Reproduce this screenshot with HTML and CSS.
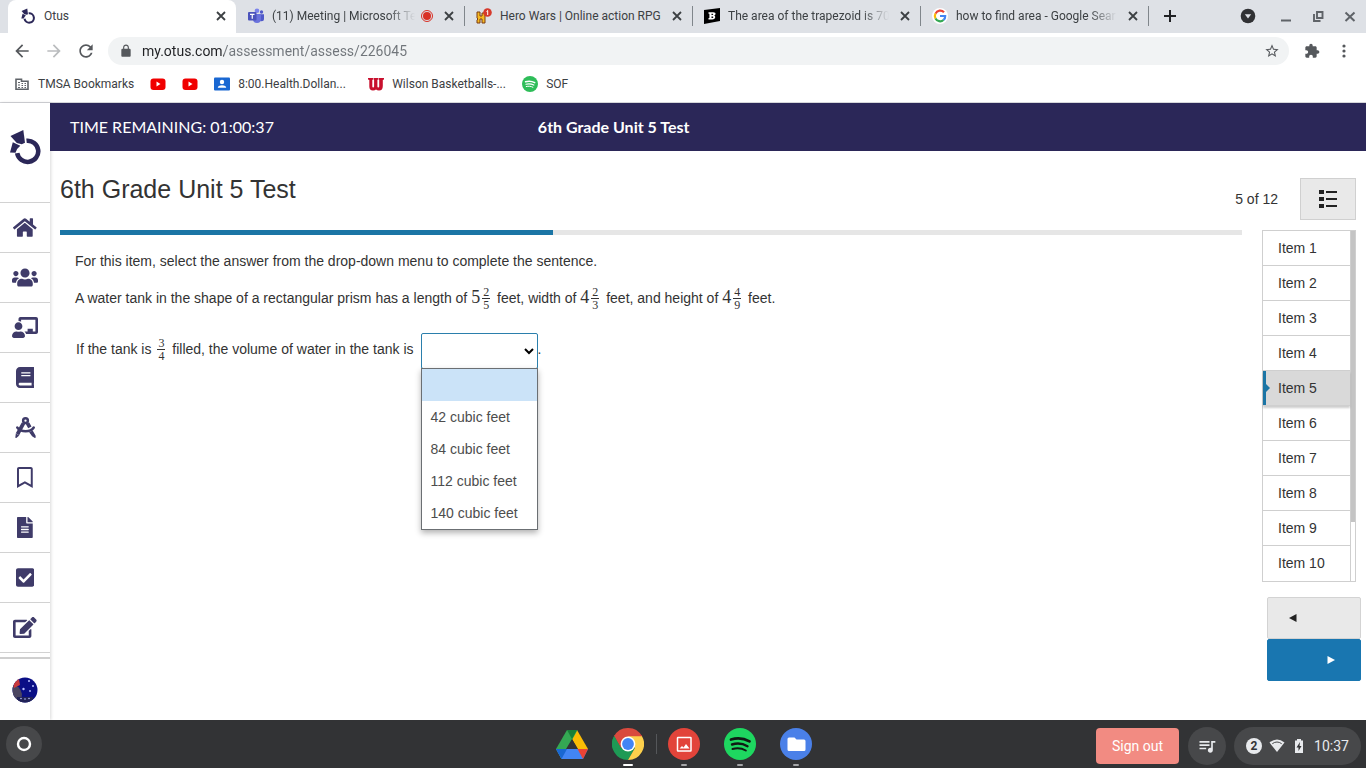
FILE: index.html
```html
<!DOCTYPE html>
<html lang="en">
<head>
<meta charset="utf-8">
<title>Otus</title>
<link rel="stylesheet" href="styles.css">
</head>
<body>
<svg class="defs" aria-hidden="true">
  <symbol id="x" viewBox="0 0 16 16"><path d="M4 4l8 8M12 4l-8 8" stroke="currentColor" stroke-width="1.8" fill="none"/></symbol>
  <symbol id="otus" viewBox="0 0 32 36"><g fill="currentColor"><path d="M14.300 1 1.500 7l6.300 7 5 1.300 3.200-1.500z"/><path d="M3.800 13.200 1 23.500l5.500.3q.8-4 4.800-7z"/></g><path d="M17.500 11.800A10.600 10.600 0 1 1 8.200 24.100" fill="none" stroke="currentColor" stroke-width="4.600"/></symbol>
  <symbol id="spotify" viewBox="0 0 32 32"><g fill="none" stroke-linecap="round"><path d="M7 11.500c6-1.800 13-1.200 18.500 1.900" stroke-width="2.800"/><path d="M8 16.500c5-1.500 11-.9 15.500 1.700" stroke-width="2.400"/><path d="M8.500 21c4.500-1.200 9.500-.7 13.300 1.500" stroke-width="2"/></g></symbol>
  <symbol id="yt" viewBox="0 0 16 16"><rect x=".5" y="2.500" width="15" height="11.500" rx="3" fill="#f00000"/><path d="M6.500 5.500v5l4-2.500z" fill="#fff"/></symbol>
</svg>

<header class="browser">
  <div class="tabs">
    <div class="tab tab-active">
      <svg class="i16 navy" viewBox="0 0 32 36"><use href="#otus"/></svg>
      <span class="tab-title">Otus</span>
      <button class="bare" aria-label="Close Otus"><svg class="i16"><use href="#x"/></svg></button>
    </div>
    <div class="tab">
      <svg class="i16" viewBox="0 0 16 16"><circle cx="13.500" cy="4" r="1.700" fill="#5059c9"/><path d="M11 6.300h5v4.500a2.500 2.500 0 0 1-5 0z" fill="#5059c9"/><circle cx="9" cy="2.800" r="2.300" fill="#7b83eb"/><path d="M5 6h8v5a4 4 0 0 1-8 0z" fill="#6a72dc"/><rect y="4" width="8.500" height="8.500" rx="1" fill="#4b53bc"/><path d="M2 6.300h4.500M4.250 6.300v4.400" stroke="#fff" stroke-width="1.200"/></svg>
      <span class="tab-title fade">(11) Meeting | Microsoft Te</span>
      <svg class="i16" viewBox="0 0 16 16"><circle cx="8" cy="8" r="5.500" fill="none" stroke="#d93025" stroke-width="1"/><circle cx="8" cy="8" r="4" fill="#d93025"/></svg>
      <button class="bare" aria-label="Close Meeting"><svg class="i16"><use href="#x"/></svg></button>
    </div>
    <div class="tab tab-sep">
      <svg class="i16" viewBox="0 0 16 16"><path d="M1 4h3v4h2V5h3v10H6v-4H4v4H1v-3l1-1-1-1z" fill="#f5b921" stroke="#7c3d12"/><circle cx="11.500" cy="4.500" r="4.300" fill="#d63a2d"/><path d="M10.500 3.500l1.200-1V7" stroke="#fff" fill="none"/></svg>
      <span class="tab-title">Hero Wars | Online action RPG</span>
      <button class="bare" aria-label="Close Hero Wars"><svg class="i16"><use href="#x"/></svg></button>
    </div>
    <div class="tab tab-sep">
      <svg class="i16" viewBox="0 0 16 16"><path d="M0 2 16 0v13L0 16z" fill="#000"/><path fill-rule="evenodd" d="M4.500 4.200h4.800q2.500 0 2.200 1.900-.2 1.200-1.300 1.500 1.300.4 1 1.900-.4 2-2.900 2H4.500V10h.9V5.700h-.9zM7.500 5.700v1.300h1q.7 0 .7-.7t-.7-.6zM7.500 8.500V10h1q.8 0 .8-.8t-.8-.7z" fill="#fff"/></svg>
      <span class="tab-title fade">The area of the trapezoid is 70</span>
      <button class="bare" aria-label="Close The area of the trapezoid"><svg class="i16"><use href="#x"/></svg></button>
    </div>
    <div class="tab tab-sep">
      <svg class="i16" viewBox="0 0 16 16"><circle cx="8" cy="8" r="8" fill="#fff"/><g fill="none" stroke-width="2.200"><path d="M12 4.300A5.200 5.200 0 0 0 3.500 5.600" stroke="#ea4335"/><path d="M3.500 5.600a5.200 5.200 0 0 0 0 4.900" stroke="#fbbc05"/><path d="M3.500 10.500A5.200 5.200 0 0 0 11.500 12" stroke="#34a853"/><path d="M11.500 12A5 5 0 0 0 13.200 8H8" stroke="#4285f4"/></g></svg>
      <span class="tab-title fade">how to find area - Google Sear</span>
      <button class="bare" aria-label="Close Google Search"><svg class="i16"><use href="#x"/></svg></button>
    </div>
    <button class="bare new-tab tab-sep" aria-label="New tab"><svg class="i16" viewBox="0 0 16 16"><path d="M8 2v12M2 8h12" stroke="currentColor" stroke-width="2"/></svg></button>
    <div class="window-controls">
      <button class="bare dark" aria-label="Search tabs"><svg class="i16" viewBox="0 0 16 16"><circle cx="8" cy="8" r="7.300" fill="currentColor"/><path d="M4.800 6.200h6.400L8 10.500z" fill="#dee1e6"/></svg></button>
      <button class="bare" aria-label="Minimize"><svg class="i16" viewBox="0 0 16 16"><path d="M3 12.500h10" stroke="currentColor" stroke-width="2"/></svg></button>
      <button class="bare" aria-label="Restore"><svg class="i16" viewBox="0 0 16 16"><path d="M7 4h5.500v6H7z M4 6v7h6.500" fill="none" stroke="currentColor" stroke-width="1.900"/></svg></button>
      <button class="bare" aria-label="Close window"><svg class="i16" viewBox="0 0 16 16"><path d="M3.500 4.500l9 8.500M12.500 4.500l-9 8.500" stroke="currentColor" stroke-width="2"/></svg></button>
    </div>
  </div>
  <div class="toolbar">
    <button class="bare" aria-label="Back"><svg class="i20" viewBox="0 0 24 24"><path fill="currentColor" d="M20 11H7.830l5.590-5.590L12 4l-8 8 8 8 1.410-1.410L7.830 13H20v-2z"/></svg></button>
    <button class="bare off" aria-label="Forward"><svg class="i20" viewBox="0 0 24 24"><path fill="currentColor" d="M12 4l-1.410 1.410L16.170 11H4v2h12.170l-5.580 5.590L12 20l8-8z"/></svg></button>
    <button class="bare" aria-label="Reload"><svg class="i20" viewBox="0 0 24 24"><path fill="currentColor" d="M17.650 6.350C16.200 4.900 14.210 4 12 4c-4.420 0-7.990 3.580-7.990 8s3.570 8 7.990 8c3.730 0 6.840-2.550 7.730-6h-2.080c-.82 2.330-3.040 4-5.650 4-3.310 0-6-2.690-6-6s2.690-6 6-6c1.660 0 3.140.69 4.220 1.780L13 11h7V4l-2.350 2.350z"/></svg></button>
    <div class="omnibox">
      <svg class="i14" viewBox="0 0 24 24"><path fill="currentColor" d="M18 8h-1V6c0-2.760-2.240-5-5-5S7 3.240 7 6v2H6c-1.100 0-2 .9-2 2v10c0 1.100.9 2 2 2h12c1.100 0 2-.9 2-2V10c0-1.100-.9-2-2-2zM9 8V6c0-1.660 1.340-3 3-3s3 1.340 3 3v2H9z"/></svg>
      <input class="url" type="text" aria-label="Address" value="my.otus.com/assessment/assess/226045">
      <button class="bare" aria-label="Bookmark this page"><svg class="i16" viewBox="0 0 24 24"><path fill="currentColor" d="M22 9.240l-7.190-.62L12 2 9.190 8.630 2 9.240l5.460 4.730L5.820 21 12 17.270 18.180 21l-1.630-7.030L22 9.240zM12 15.400l-3.760 2.270 1-4.280-3.320-2.880 4.380-.38L12 6.100l1.710 4.040 4.380.38-3.320 2.880 1 4.280L12 15.400z"/></svg></button>
    </div>
    <button class="bare" aria-label="Extensions"><svg class="i16" viewBox="0 0 24 24"><path fill="currentColor" d="M20.500 11H19V7c0-1.100-.9-2-2-2h-4V3.500C13 2.120 11.880 1 10.500 1S8 2.120 8 3.500V5H4c-1.100 0-1.990.9-1.990 2v3.800H3.500c1.490 0 2.700 1.210 2.700 2.700s-1.210 2.700-2.700 2.700H2V20c0 1.100.9 2 2 2h3.800v-1.500c0-1.490 1.210-2.700 2.700-2.700 1.490 0 2.700 1.210 2.700 2.700V22H17c1.100 0 2-.9 2-2v-4h1.500c1.380 0 2.500-1.120 2.500-2.500S21.880 11 20.500 11z"/></svg></button>
    <button class="bare" aria-label="Browser menu"><svg class="i16" viewBox="0 0 16 16"><g fill="currentColor"><circle cx="8" cy="3" r="1.600"/><circle cx="8" cy="8" r="1.600"/><circle cx="8" cy="13" r="1.600"/></g></svg></button>
  </div>
  <nav class="bookmarks" aria-label="Bookmarks">
    <a href="#"><svg class="i16" viewBox="0 0 16 16"><path d="M2 3.200h5.500v2H14v8H2z" fill="none" stroke="#5f6368" stroke-width="1.600"/><path d="M4 6.500h2M4 9h2M4 11.500h2M7.500 7.500h1.500M7.500 9.500h1.500M7.500 11.500h1.500M10.500 7.500H12M10.500 9.500H12M10.500 11.500H12" stroke="#5f6368" stroke-width="1.200"/></svg><span>TMSA Bookmarks</span></a>
    <a href="#" aria-label="YouTube"><svg class="i16"><use href="#yt"/></svg></a>
    <a href="#" aria-label="YouTube"><svg class="i16"><use href="#yt"/></svg></a>
    <a href="#"><svg class="i16" viewBox="0 0 16 16"><rect y="1.500" width="16" height="13" rx="1" fill="#1967d2"/><circle cx="8" cy="6" r="2.200" fill="#fff"/><path d="M3.800 11.800q0-2.600 4.200-2.600t4.200 2.600z" fill="#fff"/></svg><span class="clip">8:00.Health.Dollan...</span></a>
    <a href="#"><svg class="i16" viewBox="0 0 16 16"><path d="M0 2h5v1.500l-.7.500v6.500q0 1 .9 1t.9-1V4l-.6-.5V2H10v1.500l-.6.500v6.500q0 1 .9 1t.9-1V4l-.7-.5V2H16v1.500l-1.200.5v6q0 4.500-3.800 4.500-2 0-3-1.100-1 1.100-3 1.100-3.700 0-3.700-4V4L0 3.500z" fill="#c8102e"/></svg><span class="clip">Wilson Basketballs-...</span></a>
    <a href="#"><svg class="i16" viewBox="0 0 32 32"><circle cx="16" cy="16" r="16" fill="#2ebd59"/><use href="#spotify" stroke="#fff"/></svg><span>SOF</span></a>
  </nav>
</header>

<div class="app">
  <nav class="rail" aria-label="Otus">
    <a class="rail-logo" href="#" aria-label="Otus home"><svg viewBox="0 0 32 36"><use href="#otus"/></svg></a>
    <a href="#" aria-label="Home"><svg viewBox="0 0 576 512"><path fill="currentColor" d="M280.370 148.260L96 300.110V464a16 16 0 0 0 16 16l112.060-.29a16 16 0 0 0 15.920-16V368a16 16 0 0 1 16-16h64a16 16 0 0 1 16 16v95.640a16 16 0 0 0 16 16.050L464 480a16 16 0 0 0 16-16V300L295.670 148.260a12.190 12.190 0 0 0-15.300 0zM571.600 251.470L488 182.560V44.050a12 12 0 0 0-12-12h-56a12 12 0 0 0-12 12v72.610L318.470 43a48 48 0 0 0-61 0L4.340 251.470a12 12 0 0 0-1.600 16.900l25.500 31A12 12 0 0 0 45.150 301l235.220-193.740a12.190 12.190 0 0 1 15.300 0L530.900 301a12 12 0 0 0 16.900-1.600l25.500-31a12 12 0 0 0-1.700-16.930z"/></svg></a>
    <a href="#" aria-label="Classes"><svg viewBox="0 0 640 512"><path fill="currentColor" d="M96 224c35.300 0 64-28.700 64-64s-28.700-64-64-64-64 28.700-64 64 28.700 64 64 64zm448 0c35.300 0 64-28.700 64-64s-28.700-64-64-64-64 28.700-64 64 28.700 64 64 64zm32 32h-64c-17.600 0-33.500 7.100-45.100 18.600 40.300 22.100 68.900 62 75.100 109.400h66c17.700 0 32-14.300 32-32v-32c0-35.300-28.700-64-64-64zm-256 0c61.900 0 112-50.100 112-112S381.900 32 320 32 208 82.100 208 144s50.100 112 112 112zm76.800 32h-8.300c-20.800 10-43.900 16-68.500 16s-47.600-6-68.500-16h-8.300C179.600 288 128 339.600 128 403.200V432c0 26.500 21.500 48 48 48h288c26.500 0 48-21.500 48-48v-28.800c0-63.600-51.600-115.200-115.200-115.200zm-223.700-13.400C161.500 263.100 145.600 256 128 256H64c-35.300 0-64 28.700-64 64v32c0 17.700 14.300 32 32 32h65.900c6.300-47.400 34.900-87.300 75.200-109.400z"/></svg></a>
    <a href="#" aria-label="Lessons"><svg viewBox="0 0 640 512"><path fill="currentColor" d="M208 352c-2.390 0-4.780.35-7.060 1.090C187.980 357.300 174.350 360 160 360c-14.350 0-27.980-2.700-40.950-6.910-2.280-.74-4.660-1.090-7.050-1.090C49.940 352-.33 402.480 0 464.620.14 490.880 21.730 512 48 512h224c26.270 0 47.860-21.120 48-47.380.33-62.140-49.940-112.620-112-112.620zm-48-32c53.020 0 96-42.980 96-96s-42.980-96-96-96-96 42.980-96 96 42.980 96 96 96zM592 0H208c-26.470 0-48 22.250-48 49.590V96c23.420 0 45.100 6.780 64 17.800V64h352v288h-64v-64H384v64h-76.240c19.100 16.690 33.120 38.730 39.690 64H592c26.470 0 48-22.250 48-49.590V49.590C640 22.250 618.470 0 592 0z"/></svg></a>
    <a href="#" aria-label="Gradebook"><svg viewBox="0 0 448 512"><path fill="currentColor" d="M448 360V24c0-13.300-10.700-24-24-24H96C43 0 0 43 0 96v320c0 53 43 96 96 96h328c13.300 0 24-10.700 24-24v-16c0-7.500-3.500-14.300-8.900-18.700-4.200-15.400-4.200-59.300 0-74.700 5.400-4.300 8.900-11.100 8.900-18.600zM128 134c0-3.300 2.700-6 6-6h212c3.300 0 6 2.700 6 6v20c0 3.300-2.700 6-6 6H134c-3.300 0-6-2.700-6-6v-20zm0 64c0-3.300 2.700-6 6-6h212c3.300 0 6 2.700 6 6v20c0 3.300-2.700 6-6 6H134c-3.300 0-6-2.700-6-6v-20zm253.400 250H96c-17.700 0-32-14.300-32-32 0-17.600 14.400-32 32-32h285.400c-1.900 17.100-1.900 46.900 0 64z"/></svg></a>
    <a href="#" aria-label="Plans"><svg viewBox="0 0 512 512"><g fill="none" stroke="currentColor"><circle cx="256" cy="90" r="58" stroke-width="60"/><path d="M55 255c90 125 320 125 402 0" stroke-width="60" stroke-linecap="round"/><path d="M205 155 60 420M307 155l55 100" stroke-width="92"/></g><path fill="currentColor" d="m20 400 84 52-72 58q-24 8-24-14zM345 370l86-40 72 126v44q-4 16-20 10l-66-40z"/></svg></a>
    <a href="#" aria-label="Bookmarks"><svg viewBox="0 0 384 512"><path fill="currentColor" d="M336 0H48C21.490 0 0 21.490 0 48v464l192-112 192 112V48c0-26.510-21.490-48-48-48zm0 428.430l-144-84-144 84V54a6 6 0 0 1 6-6h276c3.314 0 6 2.683 6 5.996V428.430z"/></svg></a>
    <a href="#" aria-label="Assessments"><svg viewBox="0 0 384 512"><path fill="currentColor" d="M224 136V0H24C10.700 0 0 10.700 0 24v464c0 13.300 10.700 24 24 24h336c13.300 0 24-10.700 24-24V160H248c-13.200 0-24-10.800-24-24zm64 236c0 6.600-5.400 12-12 12H108c-6.600 0-12-5.400-12-12v-8c0-6.600 5.400-12 12-12h168c6.600 0 12 5.400 12 12v8zm0-64c0 6.600-5.400 12-12 12H108c-6.600 0-12-5.400-12-12v-8c0-6.600 5.400-12 12-12h168c6.600 0 12 5.400 12 12v8zm0-72v8c0 6.600-5.400 12-12 12H108c-6.600 0-12-5.400-12-12v-8c0-6.600 5.400-12 12-12h168c6.600 0 12 5.400 12 12zm96-114.100v6.100H256V0h6.100c6.400 0 12.500 2.500 17 7l97.900 98c4.500 4.500 7 10.600 7 16.900z"/></svg></a>
    <a href="#" aria-label="Tasks"><svg viewBox="0 0 448 512"><path fill="currentColor" d="M400 480H48c-26.510 0-48-21.490-48-48V80c0-26.510 21.490-48 48-48h352c26.510 0 48 21.490 48 48v352c0 26.510-21.490 48-48 48zm-204.686-98.059l184-184c6.248-6.248 6.248-16.379 0-22.627l-22.627-22.627c-6.248-6.248-16.379-6.249-22.628 0L184 302.745l-70.059-70.059c-6.248-6.248-16.379-6.248-22.628 0l-22.627 22.627c-6.248 6.248-6.248 16.379 0 22.627l104 104c6.249 6.250 16.379 6.250 22.628.001z"/></svg></a>
    <a href="#" aria-label="Notes"><svg viewBox="0 0 576 512"><path fill="currentColor" d="M402.600 83.200l90.200 90.200c3.800 3.800 3.800 10 0 13.800L274.400 405.600l-92.800 10.300c-12.400 1.400-22.900-9.100-21.500-21.500l10.300-92.800L388.800 83.200c3.800-3.800 10-3.800 13.800 0zm162-22.900l-48.800-48.800c-15.200-15.200-39.900-15.200-55.200 0l-35.400 35.400c-3.800 3.800-3.800 10 0 13.800l90.200 90.200c3.800 3.800 10 3.800 13.800 0l35.400-35.400c15.200-15.300 15.200-40 0-55.200zM384 346.200V448H64V128h229.800c3.200 0 6.200-1.300 8.500-3.500l40-40c7.600-7.600 2.200-20.500-8.500-20.500H48C21.500 64 0 85.500 0 112v352c0 26.500 21.500 48 48 48h352c26.500 0 48-21.500 48-48V306.200c0-10.700-12.900-16-20.500-8.500l-40 40c-2.200 2.300-3.500 5.300-3.500 8.500z"/></svg></a>
    <a class="rail-user" href="#" aria-label="Profile"><svg viewBox="0 0 26 26"><clipPath id="av"><circle cx="13" cy="13" r="12.500"/></clipPath><g clip-path="url(#av)"><rect width="26" height="26" fill="#0a0f86"/><path d="M0 8q8 0 10 9l-1 9H0z" fill="#4a4560"/><path d="M1 5l6-3 1 6-6 3z" fill="#c93a3c"/><path d="M5 20h16v6H5z" fill="#222358"/><g fill="#b9c2ff"><circle cx="17" cy="4" r="1"/><circle cx="21" cy="9" r="1"/><circle cx="11.500" cy="12" r="1.200"/><circle cx="18" cy="14" r=".9"/><circle cx="9" cy="21.500" r=".8"/><circle cx="13" cy="22" r=".8"/><circle cx="17" cy="21.500" r=".8"/></g></g></svg></a>
  </nav>

  <main class="main">
    <div class="banner">
      <span>TIME REMAINING: 01:00:37</span>
      <strong>6th Grade Unit 5 Test</strong>
    </div>
    <div class="heading">
      <h1>6th Grade Unit 5 Test</h1>
      <span class="count">5 of 12</span>
      <button class="list-btn" aria-label="Item list"><svg viewBox="0 0 18 18"><path d="M0 0h5v4H0zM0 7h5v4H0zM0 14h5v4H0zM7 1h11v2H7zM7 8h11v2H7zM7 15h11v2H7z" fill="#222"/></svg></button>
    </div>
    <div class="work">
      <section class="question">
        <div class="progress"><div class="progress-fill" style="width:41.7%"></div></div>
        <p class="line">For this item, select the answer from the drop-down menu to complete the sentence.</p>
        <p class="line">A water tank in the shape of a rectangular prism has a length of <span class="mixed">5<span class="frac"><span>2</span><span>5</span></span></span> feet, width of <span class="mixed">4<span class="frac"><span>2</span><span>3</span></span></span> feet, and height of <span class="mixed">4<span class="frac"><span>4</span><span>9</span></span></span> feet.</p>
        <div class="answer">
          <label for="volume">If the tank is <span class="mixed"><span class="frac"><span>3</span><span>4</span></span></span> filled, the volume of water in the tank is</label>
          <div class="dropdown">
            <select id="volume"><option selected></option><option>42 cubic feet</option><option>84 cubic feet</option><option>112 cubic feet</option><option>140 cubic feet</option></select>
            <ul class="menu" role="listbox" aria-label="Volume choices">
              <li role="option" aria-selected="true" class="current"></li>
              <li role="option">42 cubic feet</li>
              <li role="option">84 cubic feet</li>
              <li role="option">112 cubic feet</li>
              <li role="option">140 cubic feet</li>
            </ul>
          </div>
          <span class="stop">.</span>
        </div>
      </section>
      <aside class="side">
        <div class="items">
          <ol>
            <li><a href="#">Item 1</a></li>
            <li><a href="#">Item 2</a></li>
            <li><a href="#">Item 3</a></li>
            <li><a href="#">Item 4</a></li>
            <li class="on"><a href="#" aria-current="true">Item 5</a></li>
            <li><a href="#">Item 6</a></li>
            <li><a href="#">Item 7</a></li>
            <li><a href="#">Item 8</a></li>
            <li><a href="#">Item 9</a></li>
            <li><a href="#">Item 10</a></li>
          </ol>
          <div class="track"><div class="thumb"></div></div>
        </div>
        <div class="pager">
          <button class="prev" aria-label="Previous item"><svg viewBox="0 0 8 8"><path d="M7.500 0v8L0 4z" fill="#222"/></svg></button>
          <button class="next" aria-label="Next item"><svg viewBox="0 0 8 8"><path d="M.5 0v8L8 4z" fill="#fff"/></svg></button>
        </div>
      </aside>
    </div>
  </main>
</div>

<footer class="shelf">
  <button class="round" aria-label="Launcher"><svg class="i16" viewBox="0 0 16 16"><circle cx="8" cy="8" r="6" fill="none" stroke="#fff" stroke-width="2.400"/></svg></button>
  <div class="apps">
    <button class="bare pin" aria-label="Drive"><svg viewBox="0 0 32 32"><path d="M11 2h10l11 19H21.500z" fill="#fbbc04"/><path d="M11 2 0 21l5.500 10L21.500 2z" fill="#34a853"/><path d="M11 2h10l-5 9z" fill="#188038"/><path d="M0 21h32l-5 10H5.500z" fill="#4285f4"/><path d="M0 21h11L5.500 31z" fill="#1967d2"/><path d="M21.500 21H32l-5 10z" fill="#ea4335"/><path d="M16 11l6 10H10z" fill="#323335"/></svg></button>
    <button class="bare pin active" aria-label="Chrome"><svg viewBox="0 0 32 32"><path d="M16 16 2.140 8A16 16 0 0 1 29.860 8z" fill="#d94a3e"/><path d="M2.140 8A16 16 0 0 0 16 32l6.900-12L16 16 9.100 20z" fill="#1e9a55"/><path d="M29.860 8A16 16 0 0 1 16 32l6.900-12L16 8z" fill="#fdd04c"/><path d="M2.800 7h26.500l.6 1.200H16l-7 12L2.140 8z" fill="#d94a3e"/><path d="M2.140 8A16 16 0 0 0 1 21L9 20z" fill="#1e9a55"/><circle cx="16" cy="16" r="7.400" fill="#fff"/><circle cx="16" cy="16" r="5.900" fill="#4285f4"/></svg></button>
    <span class="divider"></span>
    <button class="bare pin open" aria-label="Gallery"><svg viewBox="0 0 32 32"><circle cx="16" cy="16" r="16" fill="#e2443a"/><rect x="9.500" y="9.500" width="13.500" height="13.500" rx=".5" fill="none" stroke="#fff" stroke-width="1.500"/><path d="M11.500 20.500l2.500-2.500 1.500 1.500 2.500-3.500 3.500 4.500z" fill="#fff"/></svg></button>
    <button class="bare pin open" aria-label="Spotify"><svg viewBox="0 0 32 32"><circle cx="16" cy="16" r="16" fill="#1ed760"/><use href="#spotify" stroke="#101a14"/></svg></button>
    <button class="bare pin open" aria-label="Files"><svg viewBox="0 0 32 32"><circle cx="16" cy="16" r="16" fill="#4a80e8"/><path d="M9 9.500h5.500l2 2H24q1.500 0 1.500 1.500v8.500q0 1.500-1.500 1.500H9q-1.500 0-1.500-1.500V11q0-1.500 1.500-1.500z" fill="#fff"/></svg></button>
  </div>
  <div class="tray">
    <button class="signout">Sign out</button>
    <button class="round" aria-label="Media"><svg class="i20" viewBox="0 0 24 24"><path fill="#e8eaed" d="M15 6H3v2h12V6zm0 4H3v2h12v-2zM3 16h8v-2H3v2zM17 6v8.180c-.31-.11-.65-.18-1-.18-1.660 0-3 1.340-3 3s1.340 3 3 3 3-1.340 3-3V8h3V6h-5z"/></svg></button>
    <button class="status">
      <span class="badge">2</span>
      <svg class="i16" viewBox="0 0 16 16"><path d="M.5 4.500Q8-1.500 15.500 4.500L8 14z" fill="#e8eaed"/><path d="M3.300 5.700Q8 2.300 12.700 5.700" fill="none" stroke="#47484a" stroke-width="1"/></svg>
      <svg class="i16" viewBox="0 0 16 16"><path d="M6 1h4v1.500h2V15H4V2.500h2z" fill="#e8eaed"/><path d="M9 4 5.500 9.500h2V13l3-5H8.500z" fill="#323335"/></svg>
      <span>10:37</span>
    </button>
  </div>
</footer>
</body>
</html>
```
FILE: styles.css
```css
* { box-sizing: border-box; }

body {
  margin: 0;
  min-height: 100vh;
  display: flex;
  flex-direction: column;
  font: 14px/20px "Liberation Sans", Arial, sans-serif;
  color: #333;
  background: #fff;
}

a { color: inherit; text-decoration: none; }
svg { display: block; flex: none; }
button { font: inherit; cursor: pointer; }
.defs { position: absolute; width: 0; height: 0; }
.i14 { width: 14px; height: 14px; }
.i16 { width: 16px; height: 16px; }
.i20 { width: 20px; height: 20px; }
.navy { color: #2b2758; }
.bare { padding: 0; border: 0; background: none; color: inherit; }

/* Browser frame */
.browser {
  font: 12px/16px Roboto, sans-serif;
  color: #3c4043;
  border-bottom: 1px solid #d5d6da;
}
.tabs {
  display: flex;
  height: 33px;
  padding-left: 8px;
  background: #dee1e6;
}
.tab {
  flex: 0 1 228px;
  min-width: 0;
  display: flex;
  align-items: center;
  gap: 8px;
  padding: 0 7px 2px 12px;
}
.tab-active { background: #fff; border-radius: 8px 8px 0 0; }
.tab-sep {
  background: linear-gradient(#80868b, #80868b) 0 6px / 1px 20px no-repeat;
}
.tab-title { flex: 1; overflow: hidden; white-space: nowrap; }
.fade { -webkit-mask-image: linear-gradient(to left, transparent, #000 28px); mask-image: linear-gradient(to left, transparent, #000 28px); }
.tab .fade + svg { margin-left: -4px; }
.tab svg + .bare { margin-left: -2px; }
.new-tab { width: 44px; padding: 0 0 2px 14px; color: #202124; }
.window-controls {
  margin-left: auto;
  padding: 0 8px 1px 0;
  display: flex;
  align-items: center;
  gap: 16px;
  color: #5f6368;
}
.window-controls .dark { color: #303134; margin-right: 6px; }

.toolbar {
  display: flex;
  align-items: center;
  gap: 12px;
  height: 36px;
  padding: 0 14px 0 12px;
  color: #55585c;
}
.off { color: #babcbe; }
.omnibox {
  flex: 1;
  display: flex;
  align-items: center;
  gap: 9px;
  height: 28px;
  padding: 0 9px 0 11px;
  border-radius: 14px;
  background: #f1f3f4;
}
.toolbar .bare:nth-last-child(2) { margin: 0 4px 0 3px; }
.url {
  flex: 1;
  min-width: 0;
  padding: 0;
  border: 0;
  outline: 0;
  font: 14px/20px Roboto, sans-serif;
  color: transparent;
  background: linear-gradient(90deg, #202124 82px, #70757a 82px);
  -webkit-background-clip: text;
  background-clip: text;
}
.bookmarks {
  display: flex;
  align-items: center;
  gap: 16px;
  height: 33px;
  padding: 0 14px 4px;
}
.bookmarks a { display: flex; align-items: center; gap: 8px; white-space: nowrap; }
.clip { width: 114px; }

/* Otus navigation rail */
.app { flex: 1; display: flex; }
.rail {
  flex: none;
  width: 50px;
  display: flex;
  flex-direction: column;
  color: #3f3b69;
  box-shadow: 1px 0 3px rgba(0, 0, 0, .15);
}
.rail a {
  display: flex;
  align-items: center;
  justify-content: center;
  height: 50px;
  border-bottom: 1px solid #d2d2d2;
}
.rail svg { height: 21px; max-width: 26px; }
.rail .rail-logo { height: 100px; padding-bottom: 11px; color: #2b2758; }
.rail .rail-logo svg { width: 32px; height: 36px; max-width: none; }
.rail .rail-user { height: 63px; margin-top: 4px; border: 0; border-top: 2px solid #cfcfcf; }
.rail .rail-user svg { width: 26px; height: 26px; }

/* Assessment */
.main { flex: 1; min-width: 0; }
.banner {
  display: grid;
  grid-template-columns: 11fr 19fr;
  align-items: center;
  height: 48px;
  padding: 0 20px;
  font: 16px/24px Lato, sans-serif;
  color: #fff;
  background: #2b2758;
}
.heading {
  display: flex;
  align-items: center;
  height: 79px;
  padding: 17px 10px 0;
}
h1 { flex: 1; margin: 0; padding-bottom: 21px; font-size: 25px; line-height: 30px; font-weight: 400; }
.count { margin-right: 22px; }
.list-btn {
  display: grid;
  place-items: center;
  width: 56px;
  height: 42px;
  border: 1px solid #d0d0d0;
  background: #e9e9e9;
}
.list-btn svg { width: 18px; height: 18px; }
.work {
  display: grid;
  grid-template-columns: 1fr 94px;
  gap: 20px;
  padding: 0 10px;
}
.progress { height: 5px; background: #e6e6e6; margin-bottom: 15px; }
.progress-fill { height: 5px; background: #1b75a5; }
.line { margin: 0 15px 12px; line-height: 22px; }
.line + .line { line-height: 28px; }
.mixed { font-family: "Liberation Serif", serif; font-size: 18px; line-height: 16px; }
.frac {
  display: inline-flex;
  flex-direction: column;
  vertical-align: middle;
  margin: 0 3px 0 2px;
  font-size: 12px;
  line-height: 12px;
  text-align: center;
}
.frac span { padding: 0 1px; }
.frac span:first-child { border-bottom: 1px solid #333; }
.answer { display: flex; align-items: center; padding: 9px 16px; }
.answer label, .stop { padding-bottom: 4px; }
.dropdown { position: relative; margin-left: 7px; }
select {
  display: block;
  width: 117px;
  height: 36px;
  padding: 0;
  border: 1px solid #2b7fac;
  border-radius: 2px;
  outline: 0;
  font: inherit;
  background: #fff;
}
.menu {
  position: absolute;
  top: 35px;
  left: 0;
  width: 100%;
  margin: 0;
  padding: 0;
  list-style: none;
  line-height: 32px;
  color: #4d4d4d;
  background: #fff;
  border: 1px solid #6b6f73;
  box-shadow: 0 3px 6px rgba(0, 0, 0, .3);
}
.menu li { height: 32px; padding-left: 9px; white-space: nowrap; }
.menu .current { background: #cbe3f8; }

.items { display: flex; border: 1px solid #cfcfcf; }
.items ol { flex: 1; margin: 0; padding: 0; list-style: none; }
.items li { height: 35px; border-bottom: 1px solid #cfcfcf; }
.items li:last-child { border: 0; }
.items a { display: block; padding-left: 15px; line-height: 35px; }
.items .on {
  background: linear-gradient(#1b75a5, #1b75a5) 0 0 / 3px 100% no-repeat, #d9d9d9;
  box-shadow: 0 2px 2px rgba(0, 0, 0, .2);
  position: relative;
}
.on::before {
  content: "";
  position: absolute;
  left: 3px;
  top: 13px;
  border: 4px solid transparent;
  border-left-color: #1b75a5;
  border-right: 0;
}
.track { width: 5px; border-left: 1px solid #cfcfcf; }
.thumb { height: 83%; background: #c4c4c4; }
.pager { display: grid; margin: 15px -5px 0 5px; }
.pager button { display: flex; align-items: center; height: 42px; padding: 0 21px; border: 1px solid #d3d3d3; border-radius: 2px; background: #e9e9e9; }
.pager .next { justify-content: flex-end; padding: 0 25px; border-color: #1976b0; background: #1976b0; }
.pager svg { width: 8px; height: 8px; }

/* System shelf */
.shelf {
  display: grid;
  grid-template-columns: 1fr auto 1fr;
  align-items: center;
  height: 48px;
  padding: 0 5px 0 6px;
  font: 14px/20px Roboto, sans-serif;
  color: #e8eaed;
  background: #323335;
}
.round {
  display: grid;
  place-items: center;
  width: 36px;
  height: 36px;
  padding: 0;
  border: 0;
  border-radius: 50%;
  background: #47484a;
}
.apps { display: flex; align-items: center; height: 48px; }
.pin { display: flex; flex-direction: column; align-items: center; gap: 4px; width: 56px; height: 48px; padding-top: 8px; }
.pin svg { width: 32px; height: 32px; }
.active::after { content: ""; width: 10px; height: 2px; border-radius: 1px; background: #fff; }
.open::after { content: ""; width: 6px; height: 2px; border-radius: 1px; background: #a5a6a8; }
.divider { width: 1px; height: 20px; margin-right: -1px; background: #55575a; }
.tray { display: flex; justify-content: flex-end; align-items: center; padding-top: 4px; }
.signout { width: 83px; height: 36px; padding: 0; border: 0; border-radius: 4px; color: #fff; background: #f28b82; }
.tray .round { width: 38px; height: 38px; margin: 0 8px 0 9px; }
.status { display: flex; align-items: center; justify-content: space-between; width: 127px; height: 38px; padding: 0 12px; border: 0; border-radius: 19px; color: #e8eaed; background: #47484a; }
.badge { width: 16px; height: 16px; border-radius: 50%; font-size: 12px; line-height: 16px; font-weight: 700; color: #323335; background: #e8eaed; }
```
